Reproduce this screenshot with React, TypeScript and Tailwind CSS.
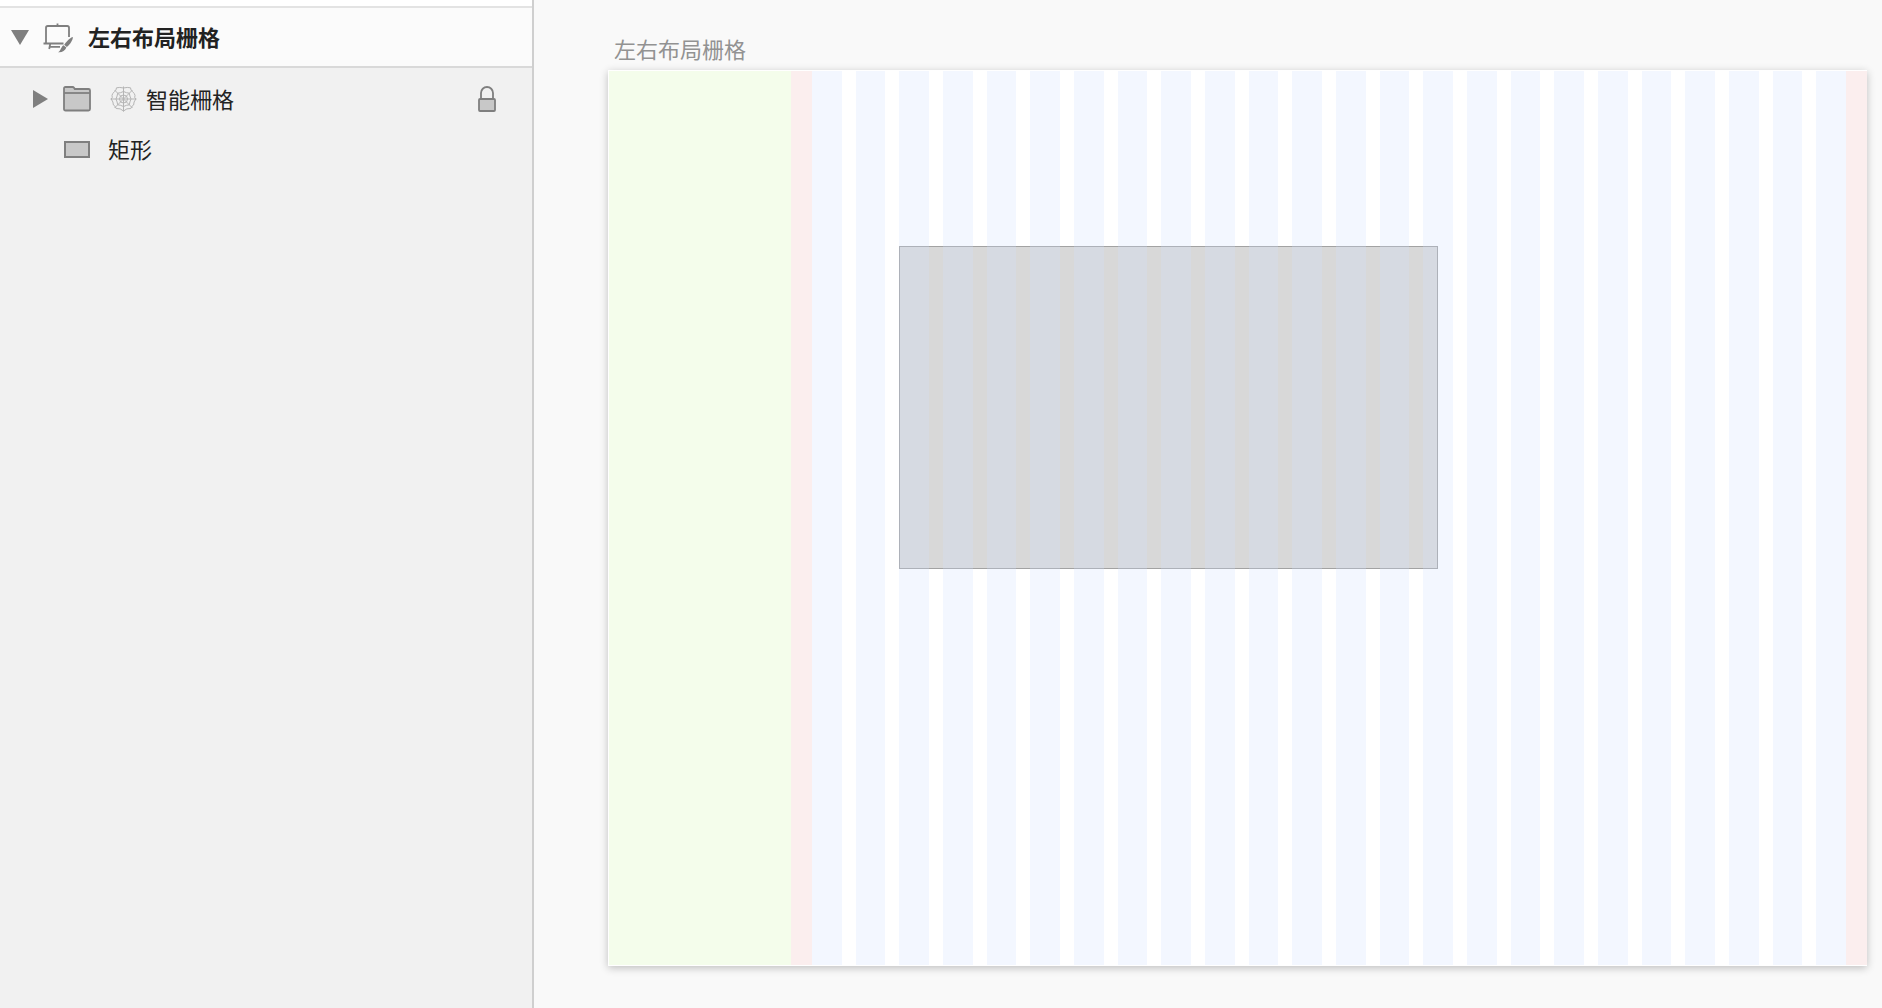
import React from "react";

const columns = Array.from({ length: 24 }, (_, i) => i);

const ArtboardIcon = () => (
  <svg width="32" height="32" viewBox="0 -2 32 32" fill="none" stroke="#7f7f7f" aria-hidden="true">
    <path
      d="M26 14V4.8Q26 3 24.2 3H4.8Q3 3 3 4.8V20.5M0.5 20.5H20.5M14.5 3V0.5M7.2 21L6.2 26M6.5 23.8H17"
      strokeWidth="1.8"
    />
    <path d="M29.8 14C30.3 16.5 27 21.5 23.8 24L21.2 21.8C23.4 18.4 27.4 14.4 29.8 14Z" fill="#7f7f7f" stroke="none" />
    <path d="M20.4 22.2L23.4 24.6C22 28 18.5 29.8 15 29.2C17.7 28 17.9 24 20.4 22.2Z" fill="#7f7f7f" stroke="none" />
  </svg>
);

const FolderIcon = () => (
  <svg width="28" height="26" viewBox="0 0 28 26" fill="#c8c8c8" stroke="#7f7f7f" strokeWidth="1.8" aria-hidden="true">
    <path d="M1 23V2.5Q1 1 2.5 1H9.5Q10.5 1 11.2 2L11.8 3H25.5Q27 3 27 4.5V23Q27 24.5 25.5 24.5H2.5Q1 24.5 1 23Z" />
    <path d="M1 7H27" />
  </svg>
);

const WebIcon = () => (
  <svg width="27" height="26" viewBox="0 0 27 26" fill="none" stroke="#b5b5b5" aria-hidden="true">
    <path d="M13.5 0.5V25.5M0.5 13H26.5M4.5 4L22.5 22M22.5 4L4.5 22" />
    <path d="M13.5 2Q17.5 1 20.5 1.8Q20.8 4.6 22.3 5.5Q25 7.5 25 9.5Q24 11.5 25.8 13Q23.5 16 23.6 19Q21.5 20 20.8 22.5Q16.5 22 13.5 25Q10.5 22 6.2 22.5Q5.5 20 3.4 19Q3.5 16 1.2 13Q3 11.5 2 9.5Q2 7.5 4.7 5.5Q6.2 4.6 6.5 1.8Q9.5 1 13.5 2Z" />
    <path d="M13.5 5.5Q16.5 7 19.3 7.2Q19.7 10 21 13Q19.7 16 19.3 18.8Q16.5 19 13.5 20.5Q10.5 19 7.7 18.8Q7.3 16 6 13Q7.3 10 7.7 7.2Q10.5 7 13.5 5.5Z" />
    <path d="M13.5 9L16.5 10L17.5 13L16.5 16L13.5 17L10.5 16L9.5 13L10.5 10Z" />
  </svg>
);

const LockIcon = () => (
  <svg width="18" height="26" viewBox="0 0 18 26" stroke="#7f7f7f" strokeWidth="1.8" aria-hidden="true">
    <path d="M3 13V7A6 6 0 0 1 15 7V13" fill="none" />
    <rect x="1" y="13" width="16" height="12" rx="1" fill="#c8c8c8" />
  </svg>
);

const Sidebar = () => {
  return (
    <aside className="flex w-[534px] shrink-0 flex-col border-r-2 border-[#cfcfcf] bg-[#f1f1f1] text-[#222222]">
      <div className="h-2 border-b-2 border-[#e3e3e3] bg-white" />
      <div className="flex h-[60px] items-center border-b-2 border-[#d9d9d9] bg-[#fbfbfb] pl-[11px]">
        <button type="button" aria-label="收起" className="mr-[14px]">
          <svg width="18" height="15" viewBox="0 0 18 15" fill="#7f7f7f">
            <path d="M0 0H18L9 15Z" />
          </svg>
        </button>
        <ArtboardIcon />
        <h1 className="ml-[13px] pb-[2px] font-bold">左右布局栅格</h1>
      </div>
      <ul className="pt-[6px]">
        <li className="flex h-[50px] items-center pl-[33px] pr-[36px]">
          <button type="button" aria-label="展开" className="mr-[15px]">
            <svg width="15" height="18" viewBox="0 0 15 18" fill="#7f7f7f">
              <path d="M0 0V18L15 9Z" />
            </svg>
          </button>
          <FolderIcon />
          <span className="ml-[19px] mr-[9px]">
            <WebIcon />
          </span>
          <span className="pb-[2px]">智能柵格</span>
          <button type="button" aria-label="解锁" className="ml-auto">
            <LockIcon />
          </button>
        </li>
        <li className="flex h-[50px] items-center pl-16">
          <span className="mr-[18px] h-[17px] w-[26px] border-2 border-[#7f7f7f] bg-[#c8c8c8]" />
          <span className="pb-[2px]">矩形</span>
        </li>
      </ul>
    </aside>
  );
};

const Artboard = () => {
  return (
    <div className="relative flex flex-1 border-y border-l border-white bg-white shadow-[0_2px_8px_rgba(0,0,0,0.24)]">
      <div className="absolute left-[290px] top-[175px] h-[323px] w-[539px] border border-[#a2a2a2] bg-[#d8d8d8]" />
      <div className="w-[182px] shrink-0 bg-[#f4fdeb]" />
      <div className="w-[21px] shrink-0 bg-[#fbeeee]" />
      <div className="relative grid flex-1 grid-cols-24 gap-x-[14px]">
        {columns.map((column) => (
          <div key={column} className="bg-[rgba(208,225,255,0.25)]" />
        ))}
      </div>
      <div className="w-[21px] shrink-0 bg-[#fbeeee]" />
    </div>
  );
};

const App = () => {
  return (
    <div className="flex min-h-screen bg-[#f9f9f9] font-['Noto_Sans_CJK_SC',sans-serif] text-[22px] leading-8">
      <Sidebar />
      <main className="flex flex-1 flex-col pb-[42px] pl-[74px] pr-[15px] pt-8">
        <h2 className="mb-[6px] pl-[6px] text-[#929292]">左右布局栅格</h2>
        <Artboard />
      </main>
    </div>
  );
};

export default App;
